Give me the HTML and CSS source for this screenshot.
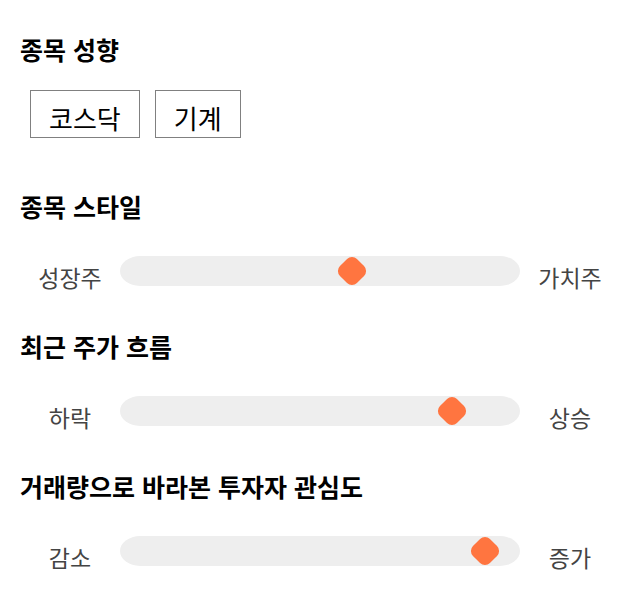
FILE: index.html
```html
<!DOCTYPE html>
<html lang="ko">
<head>
    <meta charset="UTF-8">
    <meta name="viewport" content="width=device-width, initial-scale=1.0">
    <title>종목 분석</title>
    <link rel="stylesheet" href="styles.css">
</head>
<body>

    <div class="panel">
        <!-- 종목 성향 -->
        <h2 class="section-title">종목 성향</h2>
        <div class="tag-list">
            <span class="tag">코스닥</span>
            <span class="tag">기계</span>
        </div>

        <!-- 종목 스타일 -->
        <h2 class="section-title">종목 스타일</h2>
        <div class="slider-row">
            <span class="slider-label">성장주</span>
            <div class="slider-track">
                <div class="slider-thumb" style="left: 58%;"></div>
            </div>
            <span class="slider-label">가치주</span>
        </div>

        <!-- 최근 주가 흐름 -->
        <h2 class="section-title">최근 주가 흐름</h2>
        <div class="slider-row">
            <span class="slider-label">하락</span>
            <div class="slider-track">
                <div class="slider-thumb" style="left: 83%;"></div>
            </div>
            <span class="slider-label">상승</span>
        </div>

        <!-- 투자자 관심도 -->
        <h2 class="section-title">거래량으로 바라본 투자자 관심도</h2>
        <div class="slider-row">
            <span class="slider-label">감소</span>
            <div class="slider-track">
                <div class="slider-thumb" style="left: 91.25%;"></div>
            </div>
            <span class="slider-label">증가</span>
        </div>
    </div>

</body>
</html>
```
FILE: styles.css
```css
body {
    margin: 0;
    font-family: "Noto Sans CJK KR", "Noto Sans", sans-serif;
    background-color: #fff;
    color: #000;
}

.panel {
    width: 600px;
    padding: 32px 20px 0 20px;
}

.section-title {
    margin: 0;
    font-size: 25px;
    font-weight: bold;
    line-height: 34px;
}

.tag-list {
    display: flex;
    gap: 15px;
    margin: 24px 0 51px 10px;
}

.tag {
    box-sizing: border-box;
    height: 48px;
    padding: 12px 18px 0 18px;
    border: 1px solid #808080;
    font-size: 26px;
    line-height: 30px;
}

.slider-row {
    display: flex;
    align-items: center;
    height: 30px;
    margin: 33px 0 43px 0;
}

.slider-label {
    width: 100px;
    text-align: center;
    font-size: 23px;
    line-height: 30px;
    padding-top: 12px;
    color: #444;
}

.slider-track {
    position: relative;
    width: 400px;
    height: 30px;
    background-color: #eee;
    border-radius: 20px / 15px;
}

.slider-thumb {
    position: absolute;
    top: 3px;
    width: 24px;
    height: 24px;
    margin-left: -12px;
    background-color: #ff7540;
    border-radius: 7px;
    transform: rotate(45deg);
}
```
